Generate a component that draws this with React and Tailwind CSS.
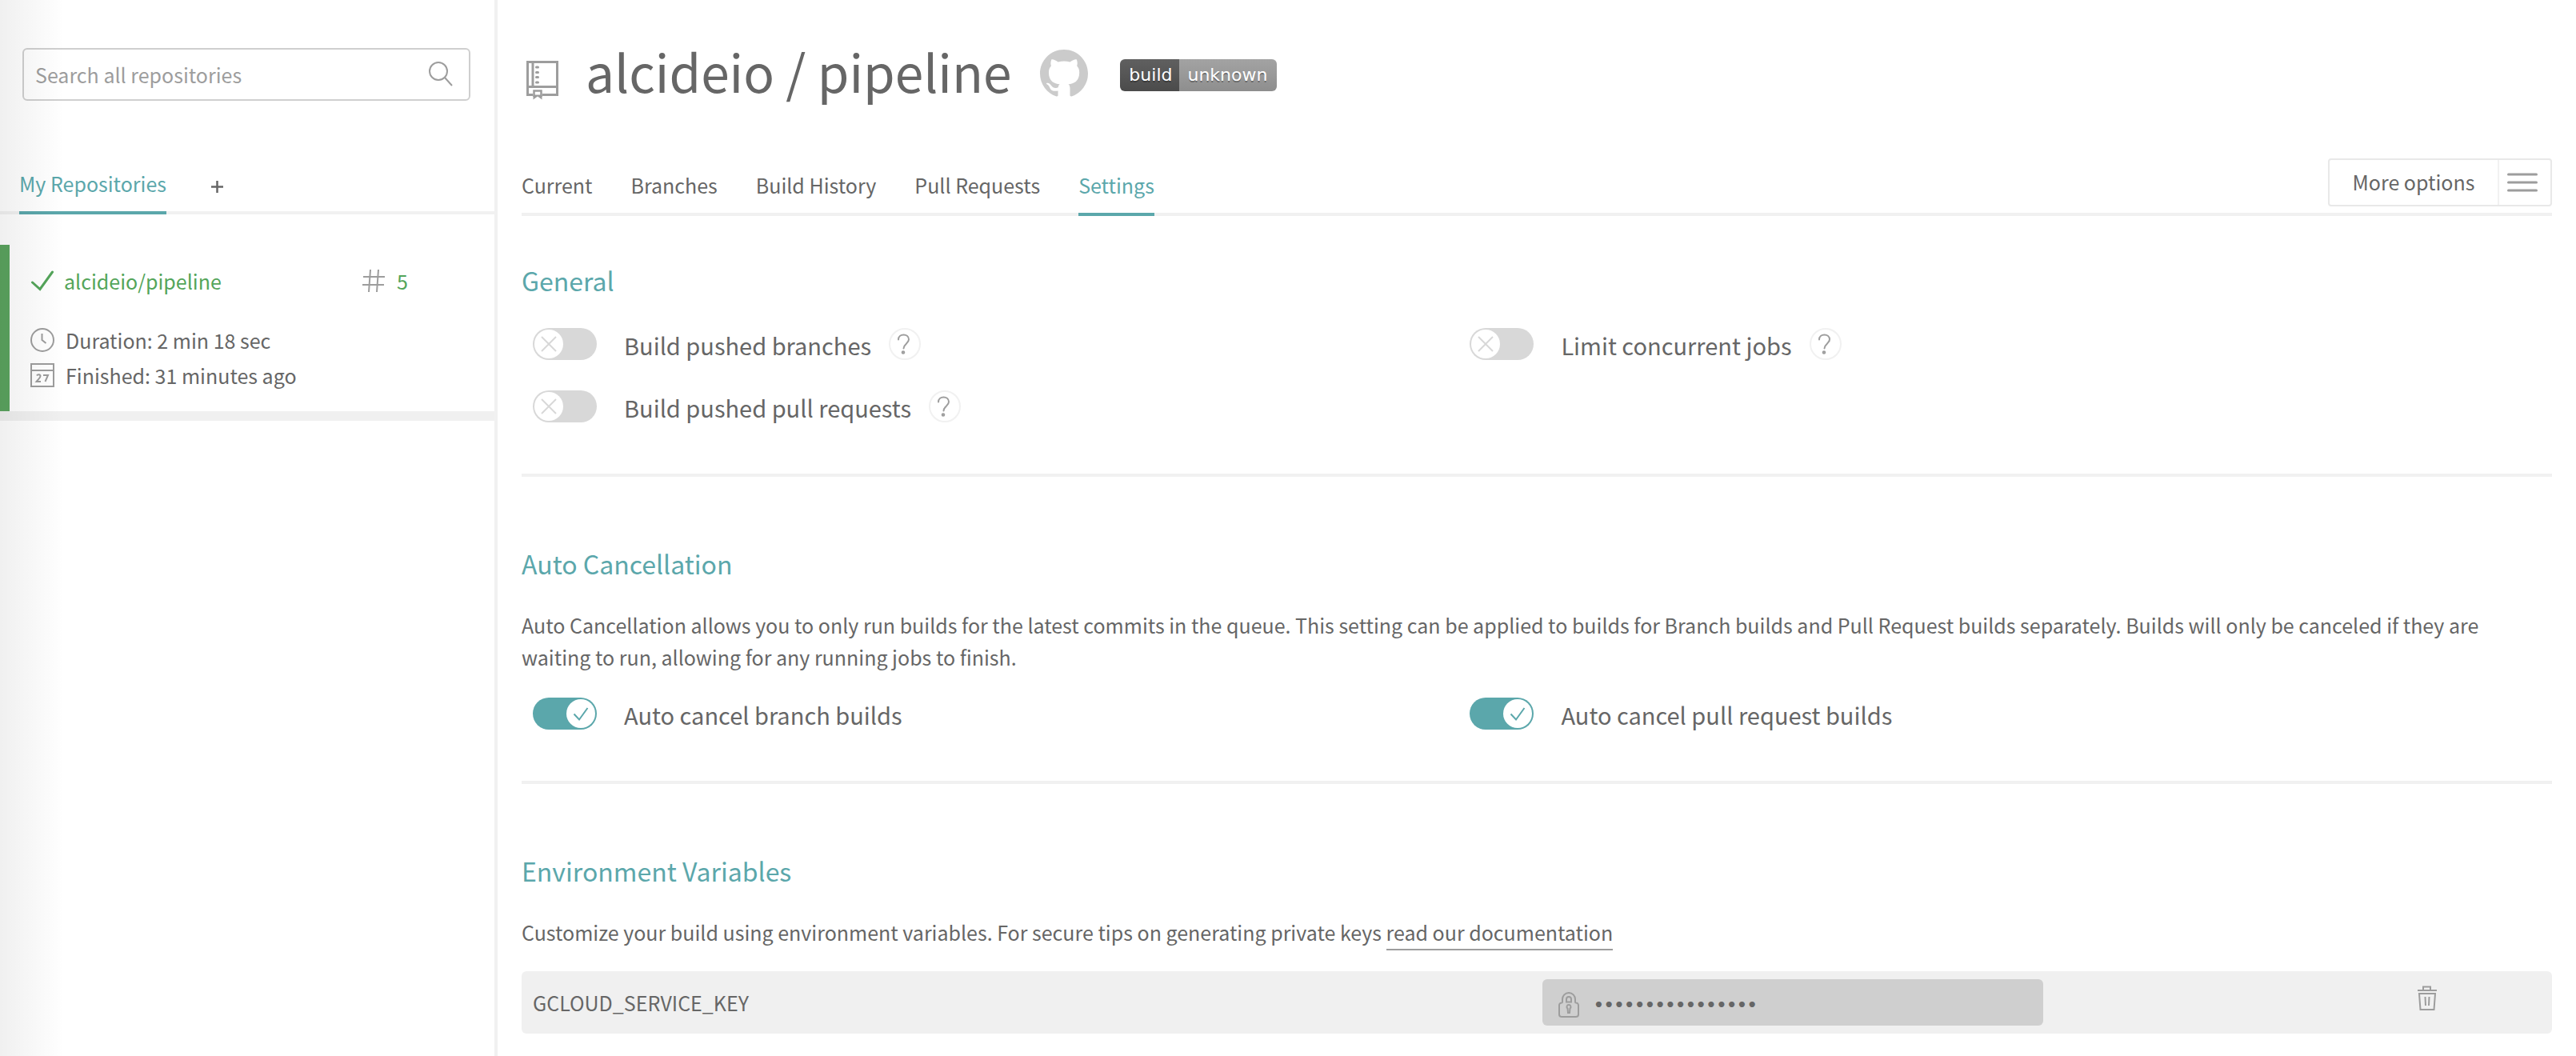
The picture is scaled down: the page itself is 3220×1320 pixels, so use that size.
const G = "#666666";

function ToggleRow({ label, on, help }) {
  return (
    <div className="flex h-[78px] items-start pl-3.5">
      <label className="flex cursor-pointer items-start">
        <span className="relative h-10 w-20 shrink-0">
          <input type="checkbox" defaultChecked={on} className="peer sr-only" />
          <span className="absolute inset-0 rounded-full bg-[#d8d8d8] peer-checked:bg-[#5ba7ab]" />
          <span className="absolute top-0.5 left-0.5 size-9 rounded-full bg-white text-[#d8d8d8] peer-checked:left-[42px] peer-checked:text-[#5ba7ab] peer-checked:[&>.off]:hidden [&>.on]:hidden peer-checked:[&>.on]:block">
            <svg viewBox="0 0 36 36" fill="none" stroke="currentColor" strokeWidth="2" className="off size-9">
              <path d="M9 9l18 18M27 9L9 27" />
            </svg>
            <svg viewBox="0 0 36 36" fill="none" stroke="currentColor" strokeWidth="2" className="on size-9">
              <path d="M9.500 18.500l6.500 7 10.500-14.500" />
            </svg>
          </span>
        </span>
        <span className="ml-[34px] text-[29px] leading-[42px]">{label}</span>
      </label>
      {help && (
        <button type="button" aria-label={`Help: ${label}`} className="ml-[22px] size-10 rounded-full border-2 border-[#f1f1f1]">
          <svg viewBox="0 0 36 36" fill="none" stroke="#9d9d9d" strokeWidth="2" strokeLinecap="round" className="size-9">
            <path d="M10 12.500c0-4 3-6 6.500-6s6.500 2.200 6.500 5.800c0 5.200-6.500 5.700-6.500 11.200" />
            <circle cx="16" cy="28.500" r="1.300" />
          </svg>
        </button>
      )}
    </div>
  );
}

function Sidebar() {
  return (
    <aside className="relative w-[622px] shrink-0 border-r-4 border-[#f1f1f1]">
      <form className="mt-[60px] mr-[30px] ml-7 flex h-[66px] items-center rounded-md border-2 border-[#cfcfcf] pr-5 pl-3.5">
        <input
          type="text"
          aria-label="Search all repositories"
          placeholder="Search all repositories"
          className="min-w-0 flex-1 bg-transparent text-[25px] leading-10 outline-none placeholder:text-[#9d9d9d]"
        />
        <button type="button" aria-label="Search">
          <svg width="30" height="32" viewBox="0 0 30 32" fill="none" stroke="#9d9d9d" strokeWidth="2">
            <circle cx="12" cy="12" r="11" />
            <path d="M20 20l9 10" />
          </svg>
        </button>
      </form>
      <nav className="mt-[78px] flex h-16 items-start gap-14 border-b-4 border-[#f1f1f1] pl-6 text-[25px] leading-[50px]">
        <a href="#mine" className="h-16 border-b-4 border-[#5ba7ab] text-[#5ba7ab]">My Repositories</a>
        <button type="button" aria-label="Add repository" className="mt-[22px]">
          <svg width="15" height="15" viewBox="0 0 15 15" stroke={G} strokeWidth="2.500">
            <path d="M7.500 0v15M0 7.500h15" />
          </svg>
        </button>
      </nav>
      <section className="mt-[38px] border-b-[12px] border-[#f0f0f0]">
        <div className="h-[208px] border-l-[12px] border-[#5ba45f] pt-[23px] pl-[26px]">
          <div className="flex h-11 items-center text-[25px] leading-[44px] text-[#54a55a]">
            <svg width="30" height="26" viewBox="0 0 30 26" fill="none" stroke="currentColor" strokeWidth="3" strokeLinecap="round">
              <path d="M2.500 15l9.500 8.500L27.500 2" />
            </svg>
            <a href="#repo" className="ml-3 w-[372px]">alcideio/pipeline</a>
            <svg width="30" height="28" viewBox="0 0 30 28" fill="none" stroke="#9d9d9d" strokeWidth="2">
              <path d="M11 0L9 28M21 0l-2 28M2 9h27M1 19h27" />
            </svg>
            <a href="#build" className="ml-3.5">5</a>
          </div>
          <div className="mt-[30px] flex h-11 items-center gap-3.5 text-[25px] leading-[44px]">
            <svg width="30" height="30" viewBox="0 0 30 30" fill="none" stroke="#9d9d9d" strokeWidth="2">
              <circle cx="15" cy="15" r="14" />
              <path d="M14.500 7v8l5 4" />
            </svg>
            Duration: 2 min 18 sec
          </div>
          <div className="flex h-11 items-center gap-3.5 text-[25px] leading-[44px]">
            <svg width="30" height="30" viewBox="0 0 30 30" fill="none" stroke="#9d9d9d" strokeWidth="2">
              <path d="M1 1h28v28H1zM1 9h28" />
              <path d="M8 15.500c1-1.800 4.500-1.500 4.500.8 0 2-3 4-5 6.700h5.500M16 15h6l-3.500 8" />
            </svg>
            Finished: 31 minutes ago
          </div>
        </div>
      </section>
      <div className="pointer-events-none absolute inset-y-0 left-0 w-20 bg-linear-to-r from-black/6 to-transparent" />
    </aside>
  );
}

const tabs = ["Current", "Branches", "Build History", "Pull Requests", "Settings"];

export default function App() {
  return (
    <div className="flex min-h-screen bg-white font-['Noto_Sans_CJK_SC','Noto_Sans',sans-serif] text-[#666666]">
      <Sidebar />
      <main className="min-w-0 flex-1 pr-[30px] pl-[30px]">
        <header className="flex h-[186px] items-start pl-1.5">
          <svg width="40" height="50" viewBox="0 0 40 50" fill="none" stroke="#9d9d9d" strokeWidth="3" className="mt-[75px]">
            <path d="M8 43.500H1.500v-41h37v41H20M1.500 33.500h37M8 3v30" />
            <path d="M9.500 46v-7.500h9V46" strokeWidth="2.500" />
            <path d="M8.500 49.500v-6h11v6L14 45.500z" fill="#9d9d9d" stroke="none" />
            <path d="M12.500 9h2M12.500 15.500h2M12.500 21.500h2M12.500 28h2" strokeLinecap="round" />
          </svg>
          <h1 className="ml-[34px] pt-[46px] text-[64px] leading-[84px] whitespace-nowrap">alcideio / pipeline</h1>
          <a href="#github" aria-label="GitHub" className="mt-[62px] ml-9">
            <svg width="60" height="60" viewBox="0 0 16 16" fill="#cbcbcb">
              <path d="M8 0C3.580 0 0 3.580 0 8c0 3.540 2.290 6.530 5.470 7.590.4.070.55-.17.55-.38 0-.19-.01-.82-.01-1.490-2.010.37-2.530-.49-2.690-.94-.09-.23-.48-.94-.82-1.130-.28-.15-.68-.52-.01-.53.63-.01 1.080.58 1.230.82.72 1.210 1.870.87 2.330.66.07-.52.28-.87.51-1.070-1.780-.2-3.640-.89-3.640-3.950 0-.87.31-1.590.82-2.150-.08-.2-.36-1.020.08-2.120 0 0 .67-.21 2.200.82.64-.18 1.320-.27 2-.27s1.360.09 2 .27c1.530-1.040 2.200-.82 2.200-.82.44 1.100.16 1.920.08 2.120.51.56.82 1.270.82 2.150 0 3.070-1.870 3.750-3.650 3.950.29.25.54.73.54 1.480 0 1.070-.01 1.930-.01 2.200 0 .21.15.46.55.38A8.010 8.010 0 0 0 16 8c0-4.420-3.580-8-8-8z" />
            </svg>
          </a>
          <a href="#badge" className="mt-[74px] ml-10 flex h-10 overflow-hidden rounded-md font-['DejaVu_Sans',sans-serif] text-[22px] leading-10 text-white [text-shadow:0_2px_0_rgb(1_1_1_/_0.3)]">
            <span className="w-[74px] bg-linear-to-b from-[#606060] to-[#4b4b4b] pl-0.5 text-center">build</span>
            <span className="w-[122px] bg-linear-to-b from-[#a3a3a3] to-[#8e8e8e] pr-0.5 text-center">unknown</span>
          </a>
        </header>

        <div className="flex h-[84px] items-start border-b-4 border-[#f1f1f1]">
          <nav className="flex flex-1 gap-12 pt-5 text-[25px] leading-[50px]">
            {tabs.map((t) => (
              <a
                key={t}
                href="#tab"
                className={t === "Settings" ? "h-16 border-b-4 border-[#5ba7ab] text-[#5ba7ab]" : "h-16"}
              >
                {t}
              </a>
            ))}
          </nav>
          <button type="button" className="mt-3 flex h-[60px] items-stretch rounded-sm border-2 border-[#e8e8e8]">
            <span className="w-[212px] border-r-2 border-[#f1f1f1] text-[25px] leading-[54px]">More options</span>
            <span className="flex w-16 items-center pl-2.5">
              <svg width="38" height="24" viewBox="0 0 38 24" stroke="#9d9d9d" strokeWidth="3" strokeLinecap="round">
                <path d="M1.500 2h35M1.500 12h35M1.500 22h35" />
              </svg>
            </span>
          </button>
        </div>

        <section className="h-[326px] border-b-4 border-[#f1f1f1] pt-[58px]">
          <h2 className="text-[32px] leading-[44px] text-[#5ba7ab]">General</h2>
          <div className="mt-[38px] grid grid-cols-[6fr_7fr]">
            <ToggleRow label="Build pushed branches" help />
            <ToggleRow label="Limit concurrent jobs" help />
            <ToggleRow label="Build pushed pull requests" help />
          </div>
        </section>

        <section className="h-[384px] border-b-4 border-[#f1f1f1] pt-[86px]">
          <h2 className="text-[32px] leading-[44px] text-[#5ba7ab]">Auto Cancellation</h2>
          <p className="mt-[35px] text-[25px] leading-10">
            Auto Cancellation allows you to only run builds for the latest commits in the queue. This setting can be applied
            to builds for Branch builds and Pull Request builds separately. Builds will only be canceled if they are waiting
            to run, allowing for any running jobs to finish.
          </p>
          <div className="mt-[31px] grid grid-cols-[6fr_7fr]">
            <ToggleRow label="Auto cancel branch builds" on />
            <ToggleRow label="Auto cancel pull request builds" on />
          </div>
        </section>

        <section className="pt-[86px]">
          <h2 className="text-[32px] leading-[44px] text-[#5ba7ab]">Environment Variables</h2>
          <p className="mt-[35px] text-[25px] leading-10">
            Customize your build using environment variables. For secure tips on generating private keys{" "}
            <a href="#docs" className="border-b-2 border-[#9d9d9d] pb-[3px]">read our documentation</a>
          </p>
          <div className="mt-[29px] flex h-[78px] items-center rounded-md bg-[#f0f0f0] pl-3.5">
            <label htmlFor="secret" className="w-[50%] text-[25px] leading-10">GCLOUD_SERVICE_KEY</label>
            <div className="flex h-[58px] w-[25%] max-w-[626px] items-center rounded-md bg-[#cfcfcf] pt-1.5 pl-5">
              <svg width="26" height="32" viewBox="0 0 26 32" fill="none" stroke="#9d9d9d" strokeWidth="2">
                <path d="M4 13.500c1 0 1-.5 1-1.500V9a8 8 0 0 1 16 0v3c0 1 0 1.500 1 1.500a3 3 0 0 1 3 3V28a3 3 0 0 1-3 3H4a3 3 0 0 1-3-3V16.500a3 3 0 0 1 3-3z" />
                <path d="M10 12.500V9a3 3 0 0 1 6 0v3.500z" />
                <path d="M13 16a2.500 2.500 0 0 0-1.500 4.500L12 26h2l.5-5.500A2.500 2.500 0 0 0 13 16z" />
              </svg>
              <input
                id="secret"
                type="password"
                readOnly
                defaultValue="xxxxxxxxxxxxxxxx"
                className="ml-[18px] min-w-0 flex-1 bg-transparent font-['DejaVu_Sans',sans-serif] text-[20px] leading-10 font-bold outline-none"
              />
            </div>
            <button type="button" aria-label="Delete variable" className="mr-[144px] mb-3 ml-auto">
              <svg width="24" height="31" viewBox="0 0 24 31" fill="none" stroke="#9d9d9d" strokeWidth="2">
                <path d="M0 6h24M7 5V1.500h9V5M2 10h20l-1.500 20h-17zM9.500 14l.5 11M14.500 14l-.5 11" />
              </svg>
            </button>
          </div>
        </section>
      </main>
    </div>
  );
}
